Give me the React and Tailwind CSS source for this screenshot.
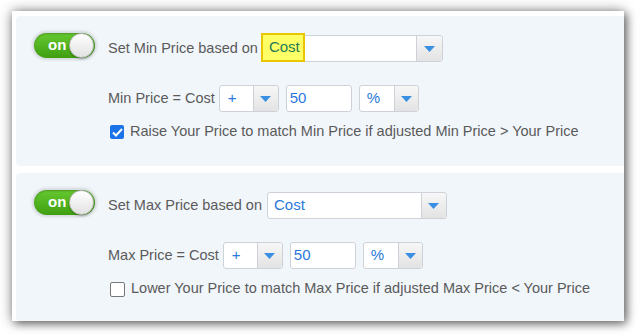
import React from "react";

const font = { fontFamily: '"Liberation Sans", Arial, sans-serif' };

function Toggle() {
  return (
    <div className="relative w-[61px] h-[25px] shrink-0 rounded-full bg-gradient-to-b from-[#66c92f] to-[#3f9f10] shadow-[0_0_3px_2px_rgba(0,0,0,0.12),inset_0_1px_2px_rgba(0,0,0,0.25)]">
      <span className="absolute left-[14px] top-[3px] text-[15px] leading-[18px] font-bold text-white">on</span>
      <div className="absolute right-[1px] top-[0px] w-[25px] h-[25px] rounded-full bg-gradient-to-b from-[#ffffff] to-[#e2e2e2] border border-[#b9b9b9] shadow-[0_1px_2px_rgba(0,0,0,0.3)]" />
    </div>
  );
}

function Caret() {
  return (
    <svg width="11" height="6" viewBox="0 0 11 6">
      <path d="M0 0 H11 L5.5 6 Z" fill="#3b8fe3" />
    </svg>
  );
}

function Select({ w, bw, text, pad = 6, highlight = false }) {
  return (
    <div
      className="relative flex h-[27px] shrink-0 rounded-[3px] border border-[#cdd1d8] bg-white"
      style={{ width: w }}
    >
      <div className="flex-1 flex items-center text-[15px] text-[#2a78dc]" style={{ paddingLeft: pad }}>
        {!highlight && text}
      </div>
      <div
        className="flex items-center justify-center border-l border-[#cdd1d8] rounded-r-[3px] bg-gradient-to-b from-[#f7f7f7] to-[#e3e3e3]"
        style={{ width: bw }}
      >
        <Caret />
      </div>
      {highlight && (
        <div className="absolute left-[-1px] top-[-3px] w-[44px] h-[29px] bg-[#ffff66] border-2 border-[#e8c600] flex items-center pl-[6px] text-[15px] text-[#1f7a55]">
          {text}
        </div>
      )}
    </div>
  );
}

function Input({ value }) {
  return (
    <div className="h-[27px] w-[66px] shrink-0 rounded-[3px] border border-[#cdd1d8] bg-white flex items-center pl-[3px] text-[15px] text-[#2a78dc]">
      {value}
    </div>
  );
}

function Check({ checked }) {
  if (checked) {
    return (
      <div className="w-[14px] h-[14px] shrink-0 rounded-[2px] bg-[#1a73e8] flex items-center justify-center">
        <svg width="11" height="9" viewBox="0 0 11 9">
          <path d="M1 4.5 L4 7.5 L10 1" stroke="white" strokeWidth="2" fill="none" />
        </svg>
      </div>
    );
  }
  return <div className="w-[15px] h-[15px] shrink-0 rounded-[2px] border border-[#777] bg-white" />;
}

function Panel({ kind, checked, text, h, selW, selBw, labelGap, highlight }) {
  return (
    <div
      className="bg-[#f1f6fb] rounded-l-[4px] pl-[18px] pt-[17px] flex gap-[13px] text-[#5a5a5a]"
      style={{ height: h }}
    >
      <Toggle />
      <div className="flex flex-col pt-[2px]">
        <div className="flex items-center h-[27px]">
          <span className="text-[14.5px]">Set {kind} Price based on</span>
          <div style={{ marginLeft: labelGap }}>
            <Select w={selW} bw={selBw} text="Cost" highlight={highlight} />
          </div>
        </div>
        <div className="flex items-center h-[27px] mt-[23px]">
          <span className="text-[14.5px] mr-[4px]">{kind} Price = Cost</span>
          <Select w={60} bw={25} text="+" pad={8} />
          <div className="ml-[7px]">
            <Input value="50" />
          </div>
          <div className="ml-[7px]">
            <Select w={60} bw={24} text="%" pad={7} />
          </div>
        </div>
        <div className="flex items-center mt-[12px] ml-[2px] h-[16px]">
          <Check checked={checked} />
          <span className="ml-[6px] text-[14.5px]">{text}</span>
        </div>
      </div>
    </div>
  );
}

export default function App() {
  return (
    <div className="w-[637px] h-[335px] bg-white pl-[12px] pt-[11px]" style={font}>
      <div className="w-[612px] h-[310px] bg-white pl-[4px] pt-[5px] flex flex-col gap-[7px] shadow-[0_0_12px_rgba(0,0,0,0.45),3px_3px_8px_rgba(0,0,0,0.4)]">
        <Panel
          kind="Min"
          h={150}
          selW={182}
          selBw={26}
          labelGap={3}
          highlight
          checked
          text="Raise Your Price to match Min Price if adjusted Min Price > Your Price"
        />
        <Panel
          kind="Max"
          h={148}
          selW={180}
          selBw={25}
          labelGap={5}
          checked={false}
          text="Lower Your Price to match Max Price if adjusted Max Price < Your Price"
        />
      </div>
    </div>
  );
}
